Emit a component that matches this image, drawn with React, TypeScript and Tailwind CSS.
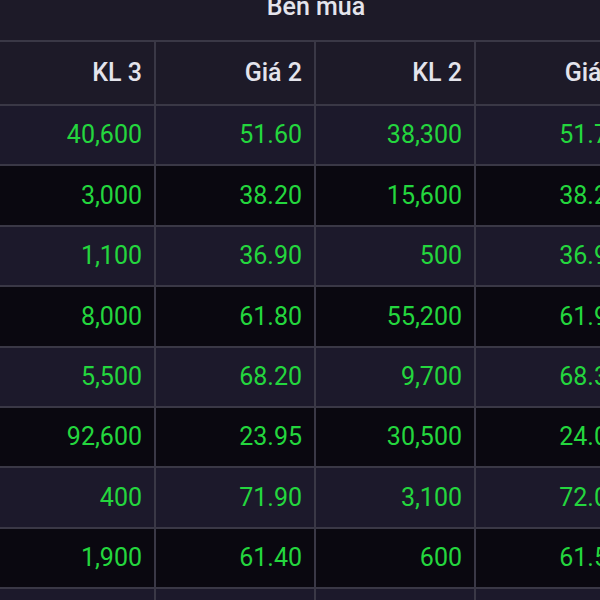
const cols = ["KL 3", "Giá 2", "KL 2", "Giá 1"];

const rows: string[][] = [
  ["40,600", "51.60", "38,300", "51.70"],
  ["3,000", "38.20", "15,600", "38.25"],
  ["1,100", "36.90", "500", "36.95"],
  ["8,000", "61.80", "55,200", "61.90"],
  ["5,500", "68.20", "9,700", "68.30"],
  ["92,600", "23.95", "30,500", "24.00"],
  ["400", "71.90", "3,100", "72.00"],
  ["1,900", "61.40", "600", "61.50"],
  ["", "", "", ""],
];

export default function App() {
  return (
    <div className="h-[600px] w-[600px] overflow-hidden bg-[#1d1a28] font-['Roboto',sans-serif]">
      <div className="ml-[-4px] mt-[-22px] w-[640px]">
        {/* group header */}
        <div className="flex h-[64px] items-center justify-center border-b-2 border-[#3a3846] pb-[5px] text-[25px] font-medium text-[#e4e4ec]">
          Bên mua
        </div>

        {/* column headers */}
        <div className="flex h-[64px] border-b-2 border-[#3a3846]">
          {cols.map((c) => (
            <div
              key={c}
              className="flex w-[160px] shrink-0 items-center justify-end border-r-2 border-[#3a3846] pr-3 text-[25px] font-medium text-[#e4e4ec]"
            >
              {c}
            </div>
          ))}
        </div>

        {/* rows */}
        {rows.map((r, i) => (
          <div
            key={i}
            className={
              "flex h-[60.4px] border-b-2 border-[#3a3846] " +
              (i % 2 === 0 ? "bg-[#1c192b]" : "bg-[#0a0810]")
            }
          >
            {r.map((v, j) => (
              <div
                key={j}
                className="flex w-[160px] shrink-0 items-center justify-end border-r-2 border-[#3a3846] pr-3 text-[25px] text-[#24d63e]"
              >
                {v}
              </div>
            ))}
          </div>
        ))}
      </div>
    </div>
  );
}
